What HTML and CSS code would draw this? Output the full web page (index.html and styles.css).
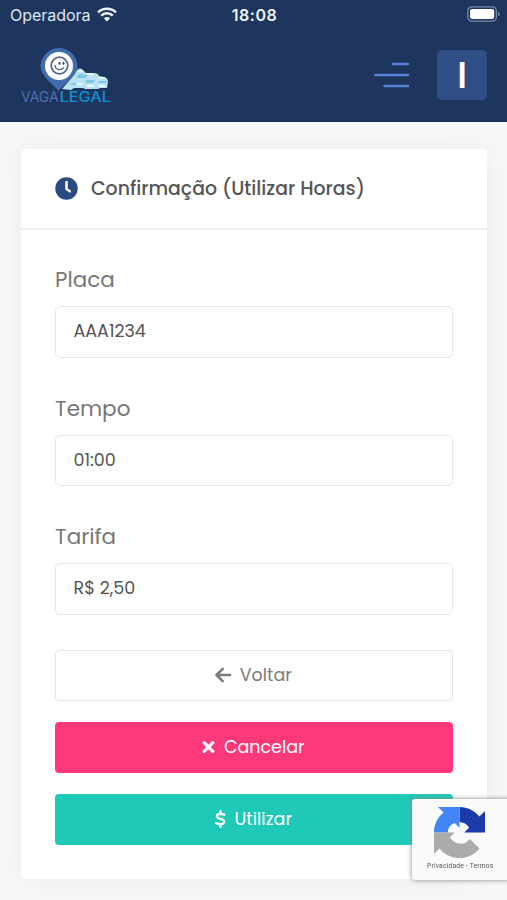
FILE: index.html
```html
<!DOCTYPE html>
<html lang="pt-BR">
<head>
<meta charset="utf-8">
<meta name="viewport" content="width=device-width, initial-scale=1">
<title>Vaga Legal</title>
<link rel="stylesheet" href="styles.css">
</head>
<body>
<header class="top">
  <div class="status">
    <div class="carrier"><span class="carrier-name">Operadora</span>
      <svg class="wifi" width="20" height="15" viewBox="0 0 20 15"><g fill="none" stroke="#edf5fb" stroke-width="2.5"><path d="M1 5.4a13 13 0 0 1 18 0"/><path d="M4.2 8.7a8.3 8.3 0 0 1 11.6 0"/></g><path d="M10 14.6l-3.1-3.2a4.4 4.4 0 0 1 6.2 0z" fill="#edf5fb"/></svg>
    </div>
    <div class="clock">18:08</div>
    <svg class="battery" width="34" height="16" viewBox="0 0 34 16"><rect x=".8" y=".8" width="28.6" height="14.4" rx="4.2" fill="none" stroke="#7989a8" stroke-width="1.3"/><rect x="3" y="3" width="24.2" height="10" rx="2.3" fill="#fff"/><path d="M31 5.8c2.2.6 2.2 3.8 0 4.4z" fill="#7989a8"/></svg>
  </div>
  <nav class="nav">
    <svg class="logo" width="94" height="60" viewBox="0 0 94 60">
      <path fill="#b9e3f5" d="M42 43l7-8 8-11q3-3 6 0l3 3h8q4 0 5 3l5 1q4 1 4 5l-1 6h-7l-2 1H65l-2-1h-9l-3 2z"/>
      <path fill="#7cc5e6" d="M57 32h8l3-3-9-1zM65 37h8l2-3h-8zM78 37h8l1-2h-8zM50 39h7l2-2h-7z"/>
      <path fill="#eefaff" d="M58 26h6l-3-3zM66 29h8l-1-2h-6zM78 33h8l-1-2h-6zM56 39h6l1-2h-6zM67 41h7v-2h-7zM79 41h6v-2h-6z"/>
      <path d="M39 2a18.500 18.500 0 0 0-18.500 18.500C20.500 30 33 38 38.500 45 44 38 57.500 30 57.500 20.500A18.500 18.500 0 0 0 39 2z" fill="#416cae"/>
      <circle cx="39" cy="20" r="14" fill="#fff"/>
      <circle cx="39.500" cy="19.500" r="8.300" fill="none" stroke="#53658c" stroke-width="1.700"/>
      <path d="M35 19c0 4.600 5.500 6.500 9 2.500" fill="none" stroke="#53658c" stroke-width="1.300"/><ellipse cx="39.500" cy="17.300" rx="1" ry="1.500" fill="#34486f"/><ellipse cx="43.500" cy="17.300" rx="1" ry="1.500" fill="#34486f"/>
      <text class="logo-vaga" x="1" y="56" textLength="37.500" lengthAdjust="spacingAndGlyphs">VAGA</text>
      <text class="logo-legal" x="39.500" y="56" textLength="51.500" lengthAdjust="spacingAndGlyphs">LEGAL</text>
    </svg>
    <svg class="menu" width="36" height="26" viewBox="0 0 36 26"><path fill="none" stroke="#5582d8" stroke-width="2.600" stroke-linecap="round" d="M19 2h15M1.500 13H34M10.500 24H34"/></svg>
    <div class="avatar">I</div>
  </nav>
</header>
<main class="page">
  <section class="card">
    <div class="card-head">
      <svg width="23" height="23" viewBox="0 0 23 23"><circle cx="11.500" cy="11.500" r="11.200" fill="#294a85"/><path d="M11.500 5v7l3.300 2.300" fill="none" stroke="#fff" stroke-width="2.500" stroke-linecap="round" stroke-linejoin="round"/></svg>
      <h1 class="title">Confirmação (Utilizar Horas)</h1>
    </div>
    <div class="card-body">
      <div class="field"><div class="label">Placa</div><div class="input">AAA1234</div></div>
      <div class="field"><div class="label">Tempo</div><div class="input">01:00</div></div>
      <div class="field"><div class="label">Tarifa</div><div class="input">R$ 2,50</div></div>
      <div class="actions">
        <div class="btn btn-back"><svg width="16" height="16" viewBox="0 0 16 16"><path d="M15 8H2M7.700 1.800L1.500 8l6.200 6.200" fill="none" stroke="#7c7c7c" stroke-width="2.600" stroke-linecap="round" stroke-linejoin="round"/></svg><span>Voltar</span></div>
        <div class="btn btn-cancel"><svg width="13" height="14" viewBox="0 0 13 14"><path d="M2.200 2.700l8.600 8.600M10.800 2.700l-8.600 8.600" stroke="#fff" stroke-width="3.200" stroke-linecap="round"/></svg><span>Cancelar</span></div>
        <div class="btn btn-use"><svg width="11" height="18" viewBox="0 0 11 18"><path d="M9.200 4.600C7.500 4 6.500 3.800 5.200 3.800 1.200 3.800.8 7.400 4 8.400l3 .9c3.300 1 2.600 4.900-1.200 4.900-1.600 0-3-.3-4.600-1.100M5.500 1v3M5.500 14v3" fill="none" stroke="#fff" stroke-width="2.300" stroke-linecap="round"/></svg><span>Utilizar</span></div>
      </div>
    </div>
  </section>
</main>
<aside class="captcha">
  <svg width="51" height="51" viewBox="0 0 64 64"><path fill="#1c3aa9" d="M32 0c10 0 19 4.500 25 12l7-7v27H38l6-6c-2-4-6-7-12-7z"/><path fill="#4285f4" d="M32 0H5l7 7C4.500 13 0 22 0 32h17.500c0-6 3-10 8.500-12l6 6z"/><path fill="#ababab" d="M0 32v27l7-7c6 7.500 15 12 25 12s19-4.500 25-12L45 40c-3 4-6.500 6-11 6-6 0-11-3-14-8l6-6z"/></svg>
  <div class="captcha-links">Privacidade - Termos</div>
</aside>
</body>
</html>
```
FILE: styles.css
```css
* { box-sizing: border-box; }
body {
  margin: 0;
  height: 900px;
  overflow: hidden;
  background: #f8f8f8;
  font-family: Poppins, Inter, "Open Sans", sans-serif;
  color: #555;
}
svg { display: block; flex: none; }
.top { height: 122px; background: #1e355e; border-bottom: 1px solid #172d55; }
.status {
  height: 30px;
  padding: 0 8px 0 10px;
  display: grid;
  grid-template-columns: 1fr auto 1fr;
  align-items: center;
  color: #edf5fb;
  font-family: Inter, sans-serif;
}
.carrier { display: flex; align-items: center; gap: 7px; font-size: 16px; color: #dce6f1; }
.carrier-name { width: 80px; letter-spacing: -.02px; }
.wifi { margin-top: -2px; }
.clock { font-size: 16px; font-weight: 600; letter-spacing: .5px; }
.battery { justify-self: end; margin: -2px -2px 0 0; }
.nav { height: 91px; padding: 0 20px; display: flex; align-items: center; }
.logo { margin-top: 1px; }
.logo-vaga, .logo-legal { font-family: Inter, sans-serif; font-size: 14.500px; }
.logo-vaga { fill: #4f6fae; }
.logo-legal { fill: #0b91d4; font-weight: 500; }
.menu { margin: -1px 0 0 auto; }
.avatar {
  width: 50px;
  height: 50px;
  margin: -1px 0 0 27px;
  border-radius: 5px;
  background: #304f86;
  color: #fff;
  display: flex;
  align-items: center;
  justify-content: center;
  font-family: Inter, sans-serif;
  font-size: 35px;
  font-weight: 600;
}
.page { padding: 27px 20px 0 21px; }
.card { height: 730px; background: #fff; border-radius: 5px; box-shadow: 0 0 30px rgba(0, 0, 0, .06); }
.card-head { height: 81px; padding: 0 34px; border-bottom: 2px solid #f1f1f5; display: flex; align-items: center; gap: 13px; }
.title { margin: 0; font-size: 18.900px; font-weight: 500; white-space: nowrap; }
.card-body { padding: 34px 34px 0; }
.field { height: 128.700px; }
.label { height: 42px; line-height: 31px; font-size: 21.500px; color: #777; }
.input {
  height: 51.500px;
  padding: 0 17.500px;
  border: 1.500px solid #e8e8e8;
  border-radius: 5px;
  line-height: 48px;
  font-size: 17.500px;
}
.actions { display: grid; gap: 21px; }
.btn {
  height: 51px;
  padding: 0 1px 1px 0;
  border-radius: 4px;
  display: flex;
  align-items: center;
  justify-content: center;
  gap: 8.500px;
  color: #fff;
  font-size: 17.500px;
}
.btn-back { border: 1px solid #e5e5e5; color: #7c7c7c; }
.btn-cancel { background: #fd3979; }
.btn-use { background: #1fc9b7; }
.captcha {
  position: fixed;
  left: 412px;
  top: 799px;
  width: 110px;
  height: 81px;
  padding: 8px 0 0 22px;
  background: #fafafa;
  border-radius: 3px;
  box-shadow: 0 0 5px #888;
}
.captcha-links { margin: 4px 0 0 -7px; font: 6.700px/8px Roboto, sans-serif; color: #555; white-space: nowrap; letter-spacing: .2px; }
```
